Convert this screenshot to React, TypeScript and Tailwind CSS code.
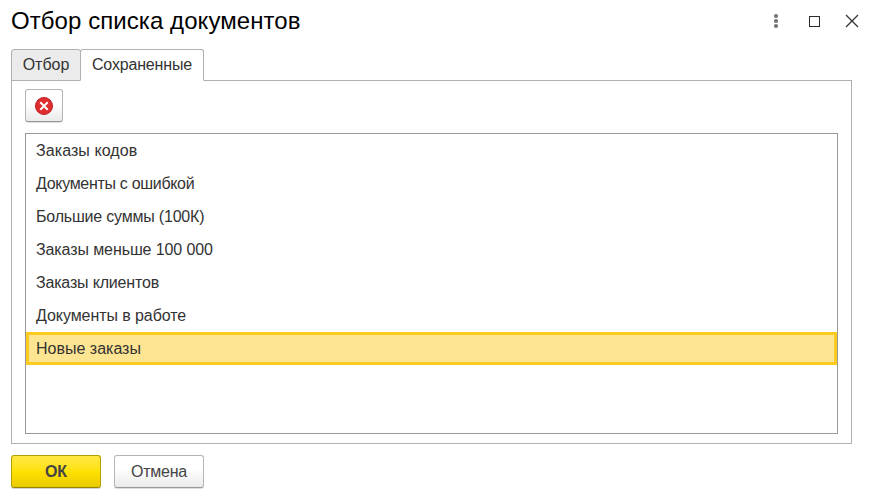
import { useState } from "react";
import clsx from "clsx";

const TABS = [
  { name: "Отбор", style: "w-[70px]" },
  { name: "Сохраненные", style: "-ml-px w-[124px] tracking-[-0.17px]" },
];

const SAVED_FILTERS = [
  { name: "Заказы кодов", tracking: "tracking-[0.08px]" },
  { name: "Документы с ошибкой", tracking: "tracking-[-0.31px]" },
  { name: "Большие суммы (100К)", tracking: "tracking-[-0.2px]" },
  { name: "Заказы меньше 100 000", tracking: "tracking-[-0.1px]" },
  { name: "Заказы клиентов", tracking: "tracking-[-0.18px]" },
  { name: "Документы в работе", tracking: "tracking-[-0.07px]" },
  { name: "Новые заказы", tracking: "tracking-normal" },
];

function WindowControls() {
  return (
    <div className="flex items-center">
      <button aria-label="Меню" className="mr-[29px]">
        <svg width="6" height="16" viewBox="0 0 6 16" fill="#737373">
          <circle cx="3" cy="3" r="2.1" />
          <circle cx="3" cy="8" r="2.1" />
          <circle cx="3" cy="13" r="2.1" />
        </svg>
      </button>
      <button aria-label="Развернуть" className="mr-[24px]">
        <svg width="13" height="16" viewBox="0 0 13 16" fill="none" stroke="#2b2b2b">
          <rect x="1.5" y="3.5" width="10" height="10" />
        </svg>
      </button>
      <button aria-label="Закрыть">
        <svg width="14" height="16" viewBox="0 0 14 16" fill="none" stroke="#333333" strokeWidth="1.3">
          <path d="M1 2l12 12M13 2L1 14" />
        </svg>
      </button>
    </div>
  );
}

function DeleteIcon() {
  return (
    <svg width="20" height="20" viewBox="0 0 20 20" fill="none">
      <circle cx="10" cy="10" r="8.5" fill="#df2c2f" stroke="#b91f22" />
      <path d="M6.3 6.3l7.4 7.4M13.7 6.3l-7.4 7.4" stroke="#ffffff" strokeWidth="2" />
    </svg>
  );
}

export default function App() {
  const [tab, setTab] = useState(1);
  const [selected, setSelected] = useState(6);

  return (
    <div className="flex h-[500px] w-[874px] flex-col bg-white pl-[11px] font-['Liberation_Sans',Arial,sans-serif] text-base text-[#333333]">
      <header className="flex h-[49px] shrink-0 items-start justify-between pt-[7px] pr-[15px]">
        <h1 className="text-2xl leading-7 tracking-[0.07px] text-black">Отбор списка документов</h1>
        <div className="pt-[6px]">
          <WindowControls />
        </div>
      </header>

      {/* Tabs overlap the panel border by one pixel */}
      <div className="relative z-10 -mb-px flex h-8 shrink-0">
        {TABS.map(({ name, style }, i) => (
          <button
            key={name}
            onClick={() => setTab(i)}
            className={clsx(
              "h-8 rounded-t-[3px] border border-[#b0b0b0] pb-px",
              style,
              i === tab ? "border-b-white bg-white" : "bg-[#ebebeb]"
            )}
          >
            {name}
          </button>
        ))}
      </div>

      <main className="flex h-[364px] w-[841px] shrink-0 flex-col border border-[#b0b0b0] px-[13px] pt-2 pb-[9px]">
        <button
          aria-label="Удалить"
          className="flex h-[33px] w-[38px] shrink-0 items-center justify-center rounded-[3px] border border-[#b5b5b5] border-b-[#999999] bg-linear-to-b from-white from-40% to-[#ebebeb] pt-px shadow-[0_1px_0_#dedede]"
        >
          <DeleteIcon />
        </button>

        <ul className="mt-[11px] flex-1 border border-[#999999]">
          {SAVED_FILTERS.map(({ name, tracking }, i) => (
            <li
              key={name}
              onClick={() => setSelected(i)}
              className={clsx(
                "flex h-[33px] items-center border-3 px-[7px]",
                tracking,
                i === selected ? "border-[#fccb1f] bg-[#fee591]" : "border-transparent"
              )}
            >
              {name}
            </li>
          ))}
        </ul>
      </main>

      <footer className="mt-[11px] flex gap-[13px]">
        <button className="h-[33px] w-[90px] rounded-[3px] border border-[#b59f00] border-b-[#978500] bg-linear-to-b from-[#ffe840] via-[#ffe100] to-[#eacb00] font-bold text-[#444444] shadow-[0_1px_0_#d4d4d4]">
          ОК
        </button>
        <button className="h-[33px] w-[90px] rounded-[3px] border border-[#b5b5b5] border-b-[#999999] bg-linear-to-b from-white from-40% to-[#ebebeb] tracking-[-0.25px] text-[#444444] shadow-[0_1px_0_#dedede]">
          Отмена
        </button>
      </footer>
    </div>
  );
}
